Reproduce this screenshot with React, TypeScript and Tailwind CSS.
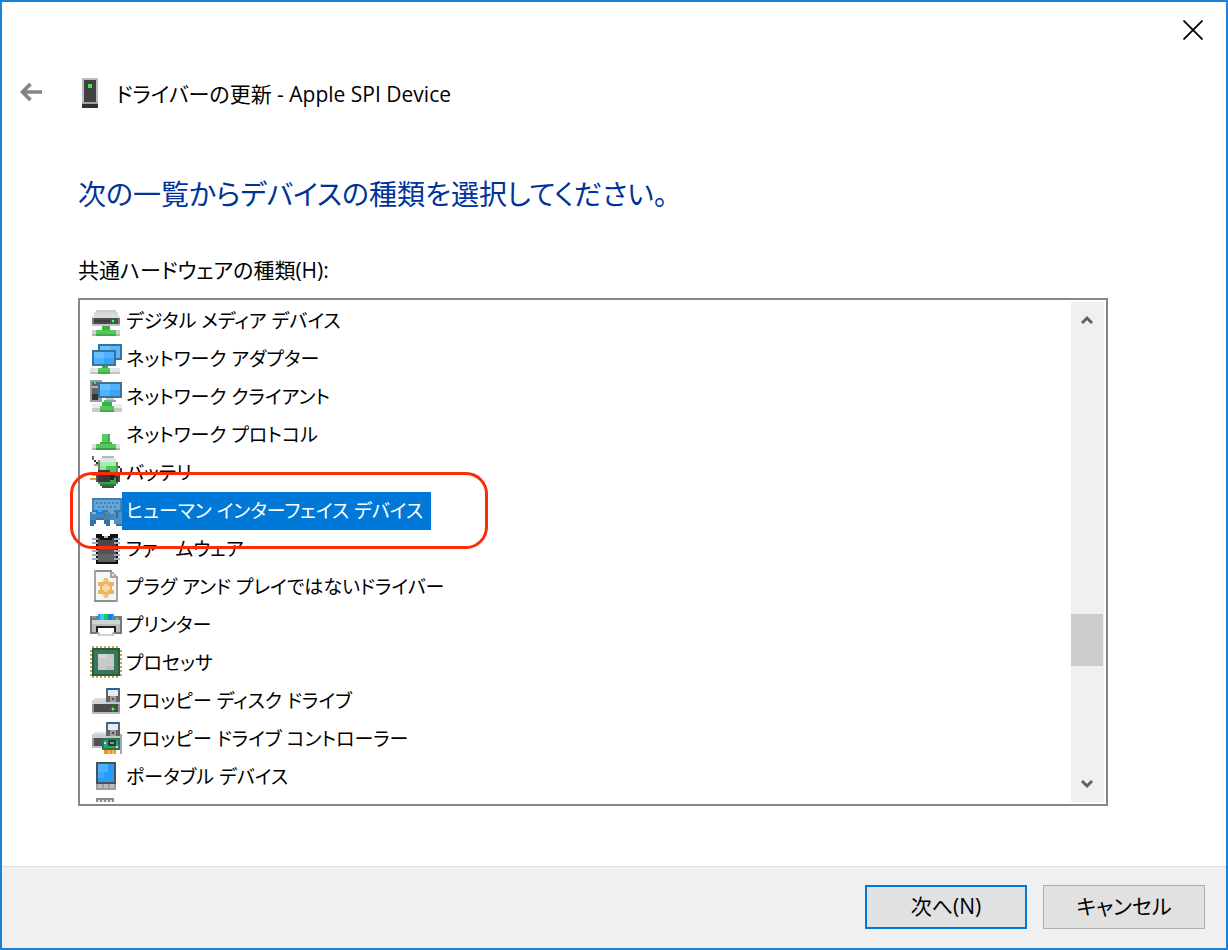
import React from 'react';

// x, y, width, height, colour on a 16x16 grid
type Px = [number, number, number, number, string];

const ICONS: Record<string, Px[]> = {
  media: [
    [3, 3, 10, 1, '#c9cdd0'], [2, 4, 12, 1, '#d5d8da'], [2, 5, 12, 1, '#d9dbdd'], [1, 6, 14, 1, '#dcdee0'],
    [1, 7, 14, 3, '#4c4c4c'], [1, 7, 1, 3, '#7a7a7a'], [14, 7, 1, 3, '#7a7a7a'], [2, 8, 8, 1, '#3d3d3d'],
    [1, 10, 14, 1, '#bfc2c4'], [10, 8, 3, 1, '#1f7a2b'], [11, 7, 1, 3, '#1f7a2b'], [11, 8, 1, 1, '#5cff5c'],
    [6, 11, 4, 2, '#3fae49'], [3, 13, 10, 3, '#55c85b'], [3, 15, 10, 1, '#3fae49'],
    [1, 13, 2, 3, '#d0d0d0'], [13, 13, 2, 3, '#d0d0d0'], [1, 15, 2, 1, '#b5b5b5'], [13, 15, 2, 1, '#b5b5b5'],
  ],
  adapter: [
    [4, 1, 12, 8, '#39719f'], [5, 2, 10, 6, '#58b8fb'], [5, 2, 5, 2, '#6cc4ff'],
    [1, 4, 12, 8, '#39719f'], [2, 5, 10, 6, '#4fb2fa'], [2, 5, 5, 3, '#66c0ff'], [7, 8, 5, 3, '#3ca5f3'],
    [6, 12, 3, 1, '#3fae49'], [4, 13, 6, 2, '#55c85b'], [4, 15, 6, 1, '#3fae49'],
    [0, 13, 4, 2, '#e4e4e4'], [10, 13, 5, 2, '#e4e4e4'], [0, 15, 4, 1, '#c4c4c4'], [10, 15, 5, 1, '#c4c4c4'],
  ],
  client: [
    [0, 0, 6, 11, '#9b9ea1'], [1, 1, 3, 9, '#606366'], [2, 1, 1, 1, '#42e64a'], [1, 3, 3, 1, '#b4b7ba'], [1, 7, 3, 3, '#353535'],
    [4, 1, 12, 8, '#39719f'], [5, 2, 10, 6, '#4fb2fa'], [5, 2, 5, 3, '#66c0ff'], [10, 5, 5, 3, '#3ca5f3'],
    [8, 9, 4, 1, '#bac8d4'], [7, 10, 6, 1, '#8ca4bb'],
    [7, 10, 2, 1, '#55c85b'], [6, 11, 5, 2, '#3fae49'], [5, 13, 7, 2, '#55c85b'], [5, 15, 7, 1, '#3fae49'],
    [1, 12, 4, 2, '#ececec'], [12, 12, 4, 2, '#ececec'], [1, 14, 4, 2, '#cacaca'], [12, 14, 4, 2, '#cacaca'],
  ],
  protocol: [
    [6, 8, 4, 5, '#3fae49'], [6, 8, 3, 4, '#5bc961'], [5, 12, 6, 1, '#3fae49'],
    [3, 13, 10, 2, '#55c85b'], [3, 15, 10, 1, '#3c9c45'],
    [1, 13, 2, 2, '#dedede'], [13, 13, 2, 2, '#dedede'], [1, 15, 2, 1, '#b5b5b5'], [13, 15, 2, 1, '#b5b5b5'],
  ],
  battery: [
    [1, 0, 1, 2, '#6d6d6d'], [2, 2, 1, 1, '#333333'], [3, 3, 1, 1, '#333333'], [4, 2, 2, 1, '#8b8b8b'], [2, 4, 2, 1, '#9a9a9a'],
    [6, 0, 6, 1, '#b5b9bc'], [5, 1, 8, 2, '#e2e5e7'], [4, 3, 10, 11, '#738078'],
    [5, 3, 8, 2, '#a6edab'], [5, 5, 8, 3, '#4cc657'], [5, 5, 3, 3, '#8be591'],
    [5, 8, 8, 6, '#36a742'], [5, 14, 8, 1, '#257f31'], [6, 15, 6, 1, '#445249'],
    [14, 5, 1, 1, '#333333'], [15, 6, 1, 3, '#3a3a3a'], [14, 9, 1, 4, '#4a4a4a'], [13, 10, 1, 3, '#2f2f2f'],
    [4, 7, 6, 6, '#383838'], [3, 8, 1, 5, '#555555'], [10, 8, 2, 4, '#262626'], [5, 8, 4, 1, '#666666'], [12, 9, 1, 2, '#3e3e3e'],
    [0, 11, 3, 1, '#dba520'], [1, 9, 2, 1, '#dba520'],
  ],
  hid: [
    [1, 2, 15, 9, '#3f83b9'], [2, 3, 13, 7, '#65a6d8'],
    [3, 4, 1, 1, '#3f83b9'], [5, 4, 1, 1, '#3f83b9'], [7, 4, 1, 1, '#3f83b9'], [9, 4, 1, 1, '#3f83b9'], [11, 4, 1, 1, '#3f83b9'], [13, 4, 1, 1, '#3f83b9'],
    [4, 6, 1, 1, '#3f83b9'], [6, 6, 1, 1, '#3f83b9'], [8, 6, 1, 1, '#3f83b9'], [10, 6, 1, 1, '#3f83b9'], [12, 6, 1, 1, '#3f83b9'],
    [1, 8, 8, 1, '#3b79aa'], [0, 9, 10, 4, '#4384b6'], [0, 13, 2, 3, '#3572a2'], [2, 13, 1, 2, '#3572a2'],
    [8, 13, 2, 3, '#3572a2'], [7, 13, 1, 2, '#3572a2'], [3, 12, 4, 1, '#3572a2'],
    [3, 8, 4, 2, '#1681e2'], [4, 8, 2, 1, '#35a6ff'], [1, 9, 2, 1, '#80b5da'], [7, 10, 1, 1, '#a84e61'], [8, 9, 1, 1, '#43b064'],
    [10, 10, 2, 3, '#4788bb'], [12, 8, 4, 1, '#3a79aa'], [12, 9, 4, 6, '#4f91c5'], [13, 15, 3, 1, '#3572a2'], [13, 9, 1, 3, '#2e6c9b'],
  ],
  firmware: [
    [3, 1, 11, 15, '#111111'], [4, 3, 9, 12, '#535353'], [4, 3, 9, 4, '#474747'], [4, 11, 9, 4, '#616161'],
    [6, 1, 4, 1, '#ffffff'], [7, 2, 2, 1, '#b8bcc2'], [5, 3, 6, 1, '#111111'],
    [1, 3, 3, 1, '#9fb0c4'], [1, 5, 3, 1, '#9fb0c4'], [1, 7, 3, 1, '#9fb0c4'], [1, 9, 3, 1, '#9fb0c4'], [1, 11, 3, 1, '#9fb0c4'], [1, 13, 3, 1, '#9fb0c4'],
    [12, 3, 3, 1, '#9fb0c4'], [12, 5, 3, 1, '#9fb0c4'], [12, 7, 3, 1, '#9fb0c4'], [12, 9, 3, 1, '#9fb0c4'], [12, 11, 3, 1, '#9fb0c4'], [12, 13, 3, 1, '#9fb0c4'],
  ],
  driver: [
    [2, 0, 9, 1, '#8d9194'], [2, 0, 1, 16, '#a2a5a8'], [2, 15, 12, 1, '#8d9194'], [13, 3, 1, 13, '#a2a5a8'],
    [3, 1, 10, 14, '#f6f6f6'], [10, 1, 1, 3, '#a2a5a8'], [10, 3, 4, 1, '#a2a5a8'], [11, 1, 1, 1, '#a2a5a8'], [12, 2, 1, 1, '#a2a5a8'],
    [11, 2, 1, 1, '#e2e2e2'], [12, 1, 2, 1, '#ffffff'],
    [7, 4, 2, 2, '#edc383'], [4, 6, 8, 2, '#ecb45f'], [5, 8, 6, 2, '#ecb45f'], [4, 10, 8, 2, '#ecb45f'], [7, 12, 2, 2, '#edc383'],
    [6, 5, 1, 1, '#f3d9b0'], [9, 5, 1, 1, '#f3d9b0'], [6, 12, 1, 1, '#f3d9b0'], [9, 12, 1, 1, '#f3d9b0'],
    [7, 7, 2, 1, '#f5cf97'], [6, 8, 4, 2, '#f8dcae'], [7, 10, 2, 1, '#f5cf97'],
  ],
  printer: [
    [4, 3, 8, 4, '#1b9cf1'], [5, 3, 2, 3, '#49bcff'], [7, 3, 2, 4, '#16c95c'], [9, 3, 2, 3, '#1682d2'],
    [0, 4, 4, 2, '#777b7f'], [12, 4, 4, 2, '#777b7f'], [1, 4, 2, 1, '#93979a'], [13, 5, 1, 1, '#40f64a'],
    [0, 6, 16, 6, '#b9bdc1'], [1, 6, 14, 2, '#d1d4d6'], [0, 6, 1, 7, '#73777b'], [15, 6, 1, 7, '#73777b'],
    [1, 12, 14, 1, '#777b7f'], [3, 9, 10, 3, '#232323'],
    [4, 10, 8, 4, '#ffffff'], [4, 13, 8, 1, '#d1d1d1'], [4, 12, 1, 2, '#c5c5c5'], [11, 12, 1, 2, '#c5c5c5'],
  ],
  cpu: [
    [1, 0, 1, 16, '#d1a04b'], [3, 0, 1, 16, '#d1a04b'], [5, 0, 1, 16, '#d1a04b'], [7, 0, 1, 16, '#d1a04b'],
    [9, 0, 1, 16, '#d1a04b'], [11, 0, 1, 16, '#d1a04b'], [13, 0, 1, 16, '#d1a04b'],
    [0, 2, 16, 1, '#d1a04b'], [0, 4, 16, 1, '#d1a04b'], [0, 6, 16, 1, '#d1a04b'], [0, 8, 16, 1, '#d1a04b'],
    [0, 10, 16, 1, '#d1a04b'], [0, 12, 16, 1, '#d1a04b'], [0, 14, 16, 1, '#d1a04b'],
    [1, 1, 14, 14, '#235d43'], [2, 2, 12, 12, '#39775b'], [4, 4, 8, 8, '#c9c9c9'],
    [4, 4, 4, 2, '#d6d6d6'], [8, 10, 4, 2, '#bdbdbd'],
  ],
  floppy: [
    [8, 2, 7, 7, '#606468'], [9, 2, 5, 1, '#1765b0'], [9, 3, 5, 3, '#e9ecee'], [10, 6, 3, 3, '#9a9ea2'], [11, 7, 1, 1, '#4a4d50'],
    [2, 7, 6, 1, '#dadddf'], [1, 8, 7, 2, '#d2d5d7'], [8, 9, 7, 1, '#c4c7ca'],
    [1, 10, 14, 4, '#4b4b4b'], [1, 10, 1, 4, '#909395'], [14, 10, 1, 4, '#909395'], [1, 14, 14, 1, '#b6babd'],
    [10, 12, 3, 1, '#208b2c'], [11, 11, 1, 3, '#208b2c'], [11, 12, 1, 1, '#6fff68'],
  ],
  controller: [
    [8, 0, 7, 7, '#606468'], [9, 0, 5, 1, '#1765b0'], [9, 1, 5, 3, '#e9ecee'], [10, 4, 3, 3, '#9a9ea2'], [11, 5, 1, 1, '#4a4d50'],
    [2, 5, 6, 1, '#e1e3e5'], [1, 6, 7, 2, '#cdd0d3'], [8, 7, 7, 1, '#c4c7ca'],
    [1, 8, 6, 4, '#525252'], [1, 8, 1, 4, '#96999b'], [1, 12, 6, 1, '#bcc0c2'],
    [6, 8, 9, 6, '#287756'], [7, 9, 7, 4, '#3a9a70'], [9, 9, 4, 3, '#203f33'], [10, 10, 2, 1, '#7b9b8d'],
    [7, 10, 1, 1, '#cae3d6'], [13, 12, 1, 1, '#cae3d6'],
    [7, 14, 6, 2, '#e99c20'], [9, 14, 1, 2, '#f8bd45'], [11, 14, 1, 2, '#f8bd45'], [15, 6, 1, 10, '#a5a9ac'],
  ],
  portable: [
    [3, 1, 10, 14, '#4a5056'], [4, 2, 8, 9, '#279df8'], [4, 2, 5, 4, '#4ab2ff'], [4, 6, 3, 3, '#3aa9fd'],
    [3, 12, 10, 3, '#9a9da0'], [4, 12, 2, 2, '#b9bcbf'], [7, 12, 2, 2, '#b9bcbf'], [10, 12, 2, 2, '#b9bcbf'],
  ],
  port: [
    [3, 0, 9, 2, '#8b8b8b'], [4, 1, 1, 1, '#e3e3e3'], [6, 1, 1, 1, '#e3e3e3'], [8, 1, 1, 1, '#e3e3e3'], [10, 1, 1, 1, '#e3e3e3'],
  ],
  device: [
    [4, 0, 8, 13, '#b8bec3'], [5, 1, 6, 11, '#414141'], [7, 3, 2, 2, '#36ec3d'],
    [4, 12, 8, 1, '#9ca3a9'], [4, 13, 8, 2, '#303030'],
  ],
};

const DEVICES = [
  { icon: 'media', label: 'デジタル メディア デバイス' },
  { icon: 'adapter', label: 'ネットワーク アダプター' },
  { icon: 'client', label: 'ネットワーク クライアント' },
  { icon: 'protocol', label: 'ネットワーク プロトコル' },
  { icon: 'battery', label: 'バッテリ' },
  { icon: 'hid', label: 'ヒューマン インターフェイス デバイス' },
  { icon: 'firmware', label: 'ファームウェア' },
  { icon: 'driver', label: 'プラグ アンド プレイではないドライバー' },
  { icon: 'printer', label: 'プリンター' },
  { icon: 'cpu', label: 'プロセッサ' },
  { icon: 'floppy', label: 'フロッピー ディスク ドライブ' },
  { icon: 'controller', label: 'フロッピー ドライブ コントローラー' },
  { icon: 'portable', label: 'ポータブル デバイス' },
  { icon: 'port', label: '' },
];

function PixelIcon({ name }: { name: string }) {
  return (
    <svg className="w-8 h-8 shrink-0" viewBox="0 0 16 16" shapeRendering="crispEdges" aria-hidden="true">
      {ICONS[name].map(([x, y, w, h, fill], i) => (
        <rect key={i} x={x} y={y} width={w} height={h} fill={fill} />
      ))}
    </svg>
  );
}

export default function App() {
  const [selected, setSelected] = React.useState('hid');

  return (
    <div className="h-screen flex flex-col bg-white border-2 border-[#1a82d9] text-black font-['Open_Sans','Noto_Sans_CJK_JP',sans-serif] [font-feature-settings:'palt']">
      {/* Title bar */}
      <div className="flex justify-end px-[19px] pt-3.5">
        <button aria-label="閉じる" className="p-1">
          <svg className="w-5 h-5" viewBox="0 0 20 20" fill="none" stroke="#000000" strokeWidth="1.8">
            <path d="M0.5 0.5L19.5 19.5M19.5 0.5L0.5 19.5" />
          </svg>
        </button>
      </div>

      <header className="flex items-start pl-[15px] pt-[34px]">
        <button aria-label="戻る" className="p-0.5">
          <svg className="w-6 h-6" viewBox="0 0 24 24" fill="none" stroke="#848484" strokeWidth="3.6">
            <path d="M23 12H3M11.5 4L3.5 12L11.5 20" />
          </svg>
        </button>
        <div className="flex items-start gap-2.5 pl-[29px]">
          <PixelIcon name="device" />
          <h1 className="text-[21px] leading-8">ドライバーの更新 - Apple SPI Device</h1>
        </div>
      </header>

      <main className="flex-1 min-h-0 flex flex-col pl-[76px] pr-[118px] pb-[60px]">
        <h2 className="mt-16 text-[28px] leading-10 text-[#003399]">次の一覧からデバイスの種類を選択してください。</h2>
        <p id="hardware-types" className="mt-10 mb-3 text-[21px] leading-8">共通ハードウェアの種類(H):</p>

        <div className="relative flex-1 min-h-0">
          <div className="h-full flex border-2 border-[#828790] p-0.5">
            <ul role="listbox" aria-labelledby="hardware-types" className="flex-1 overflow-hidden pl-2">
              {DEVICES.map(({ icon, label }) => (
                <li
                  key={icon}
                  role="option"
                  aria-selected={icon === selected}
                  onClick={() => setSelected(icon)}
                  className="flex h-[38px]"
                >
                  <span className="pt-0.5">
                    <PixelIcon name={icon} />
                  </span>
                  <span
                    className={
                      icon === selected
                        ? 'pl-1 pr-2 text-[19px] leading-[38px] whitespace-nowrap bg-[#0078d7] text-white'
                        : 'pl-1 pr-2 text-[19px] leading-[38px] whitespace-nowrap'
                    }
                  >
                    {label}
                  </span>
                </li>
              ))}
            </ul>

            {/* Scrollbar */}
            <div className="w-[33px] flex flex-col bg-[#f0f0f0]">
              <button aria-label="上へスクロール" className="h-9 flex items-center justify-center pr-0.5">
                <svg className="w-3 h-3" viewBox="0 0 12 12" fill="none" stroke="#606060" strokeWidth="3">
                  <path d="M1 9L6 4L11 9" />
                </svg>
              </button>
              <div className="grow-[276]"></div>
              <div className="h-[52px] mr-px bg-[#cdcdcd]"></div>
              <div className="grow-[100]"></div>
              <button aria-label="下へスクロール" className="h-9 flex items-center justify-center pr-0.5">
                <svg className="w-3 h-3" viewBox="0 0 12 12" fill="none" stroke="#606060" strokeWidth="3">
                  <path d="M1 3L6 8L11 3" />
                </svg>
              </button>
            </div>
          </div>

          {/* Highlight around the entry to pick */}
          <div className="absolute -left-2 top-[174px] w-[418px] h-[77px] border-3 border-[#fc2b08] rounded-[22px] pointer-events-none"></div>
        </div>
      </main>

      <footer className="flex justify-end gap-4 bg-[#f0f0f0] border-t border-[#dfdfdf] pt-[18px] pb-[19px] pr-[21px]">
        <button className="w-[162px] h-11 bg-[#e1e1e1] border-2 border-[#0078d7] text-[21px]">次へ(N)</button>
        <button className="w-[162px] h-11 bg-[#e1e1e1] border border-[#adadad] text-[21px]">キャンセル</button>
      </footer>
    </div>
  );
}
